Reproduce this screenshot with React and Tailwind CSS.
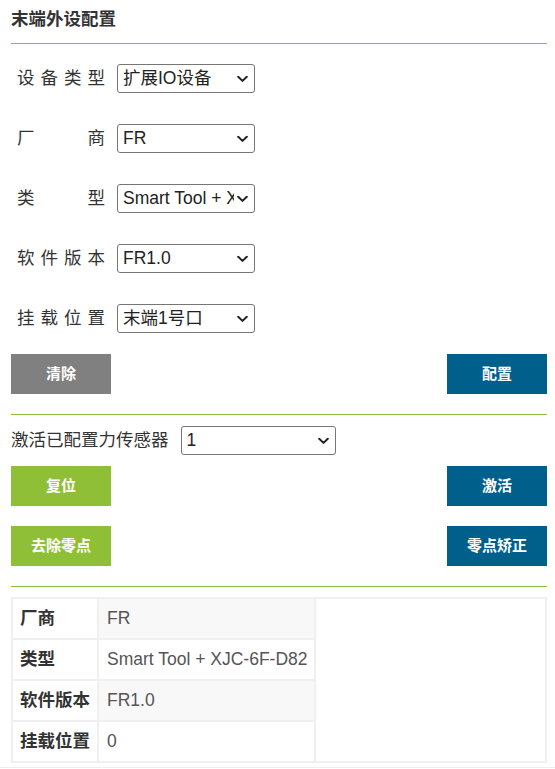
import React from 'react';

const font = { fontFamily: '"Liberation Sans", "Noto Sans CJK SC", sans-serif' };

const formRows = [
  { label: ['设', '备', '类', '型'], value: '扩展IO设备' },
  { label: ['厂', '商'], value: 'FR' },
  { label: ['类', '型'], value: 'Smart Tool + XJC-6F-D82' },
  { label: ['软', '件', '版', '本'], value: 'FR1.0' },
  { label: ['挂', '载', '位', '置'], value: '末端1号口' },
];

const infoRows = [
  { label: '厂商', value: 'FR' },
  { label: '类型', value: 'Smart Tool + XJC-6F-D82' },
  { label: '软件版本', value: 'FR1.0' },
  { label: '挂载位置', value: '0' },
];

const Chevron = () => (
  <svg
    className="pointer-events-none absolute right-[7px] top-1/2 -translate-y-1/2"
    width="11"
    height="7"
    viewBox="0 0 11 7"
    fill="none"
  >
    <path d="M1.2 1.2 L5.5 5.4 L9.8 1.2" stroke="#222" strokeWidth="2" strokeLinecap="round" strokeLinejoin="round" />
  </svg>
);

const Select = ({ value, width }) => (
  <div className={`relative h-[29px] ${width}`}>
    <select
      defaultValue={value}
      className="h-full w-full appearance-none rounded-[3px] border border-[#767676] bg-white pl-[5px] pr-[20px] text-[17.5px] text-[#222] outline-none"
    >
      <option value={value}>{value}</option>
    </select>
    <Chevron />
  </div>
);

const Button = ({ children, color }) => (
  <button className={`h-[40px] w-[100px] ${color} text-[15px] font-bold text-white`}>{children}</button>
);

const App = () => {
  return (
    <div className="min-h-[769px] w-[555px] bg-white text-[#333]" style={font}>
      <div className="pl-[11px] pr-[8px]">
        <div className="flex h-[44px] items-center border-b border-[#8cbf3a] pb-[6px] pt-[2px] text-[17.5px] font-bold text-[#333]">
          末端外设配置
        </div>

        <div className="mt-[20px] flex flex-col gap-[31px]">
          {formRows.map((row, i) => (
            <div key={i} className="flex items-center">
              <div className="ml-[6px] mr-[12px] flex w-[88px] justify-between text-[17.5px] text-[#333]">
                {row.label.map((ch, j) => (
                  <span key={j}>{ch}</span>
                ))}
              </div>
              <Select value={row.value} width="w-[138px]" />
            </div>
          ))}
        </div>

        <div className="mt-[21px] flex justify-between">
          <Button color="bg-[#808080]">清除</Button>
          <Button color="bg-[#00608c]">配置</Button>
        </div>

        <div className="mt-[20px] border-t border-[#8cbf3a]" />

        <div className="mt-[11px] flex items-center">
          <span className="mr-[12px] text-[17.5px] text-[#333]">激活已配置力传感器</span>
          <Select value="1" width="w-[155px]" />
        </div>

        <div className="mt-[11px] flex justify-between">
          <Button color="bg-[#8fbf37]">复位</Button>
          <Button color="bg-[#00608c]">激活</Button>
        </div>

        <div className="mt-[20px] flex justify-between">
          <Button color="bg-[#8fbf37]">去除零点</Button>
          <Button color="bg-[#00608c]">零点矫正</Button>
        </div>

        <div className="mt-[20px] border-t border-[#8cbf3a]" />

        <table className="mt-[10px] w-[536px] table-fixed border-separate border-spacing-[2px] bg-[#f0f0f0] text-[17.5px]">
          <colgroup>
            <col className="w-[84px]" />
            <col className="w-[215px]" />
            <col />
          </colgroup>
          <tbody>
            {infoRows.map((row, i) => (
              <tr key={i} className="h-[39px]">
                <th className="whitespace-nowrap bg-white px-[7px] text-left font-bold text-[#333]">{row.label}</th>
                <td className={`${i % 2 === 0 ? 'bg-[#f8f8f8]' : 'bg-white'} whitespace-nowrap px-[8px] text-[#555]`}>
                  {row.value}
                </td>
                {i === 0 && <td rowSpan={4} className="bg-white" />}
              </tr>
            ))}
          </tbody>
        </table>
      </div>
      <div className="mt-[4px] border-t border-[#eeeeee]" />
    </div>
  );
};

export default App;
